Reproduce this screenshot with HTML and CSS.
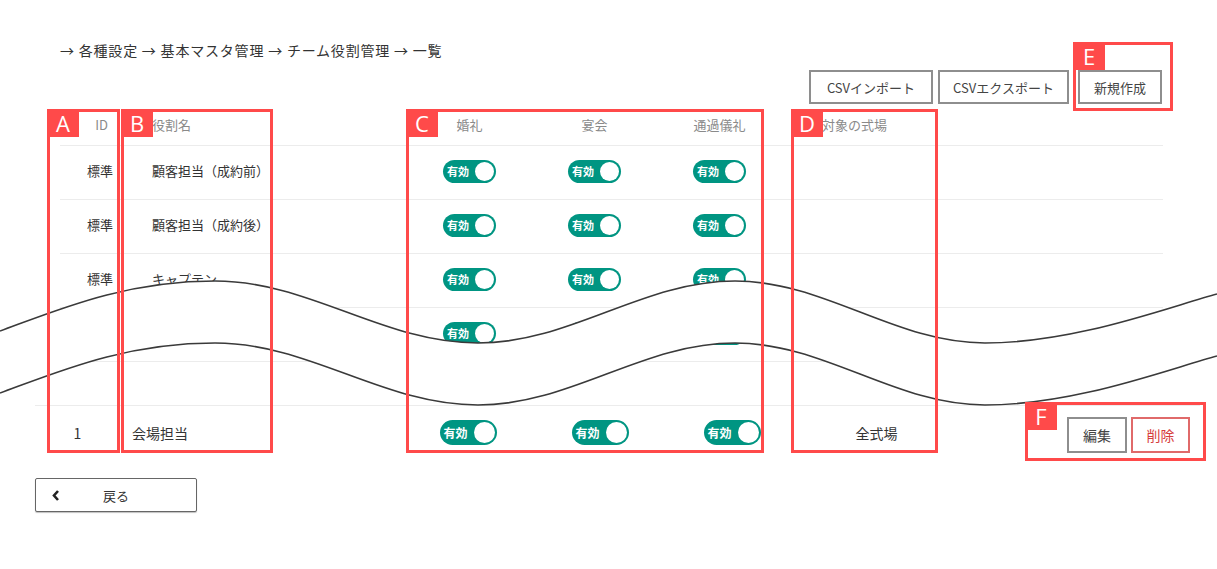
FILE: index.html
```html
<!DOCTYPE html>
<html lang="ja">
<head>
    <meta charset="UTF-8">
    <meta name="viewport" content="width=device-width, initial-scale=1.0">
    <title>チーム役割管理 一覧</title>
    <link rel="stylesheet" href="styles.css">
</head>
<body>
    <div class="page">
        <nav class="breadcrumb">→ 各種設定 → 基本マスタ管理 → チーム役割管理 → 一覧</nav>

        <div class="toolbar">
            <button class="btn btn-import">CSVインポート</button>
            <button class="btn btn-export">CSVエクスポート</button>
            <button class="btn btn-new">新規作成</button>
        </div>

        <!-- upper part of the list -->
        <div class="roles">
            <div class="roles-head">
                <div class="cell-id">ID</div>
                <div class="cell-name">役割名</div>
                <div class="cell-flag">婚礼</div>
                <div class="cell-flag">宴会</div>
                <div class="cell-flag">通過儀礼</div>
                <div class="cell-place">対象の式場</div>
                <div></div>
            </div>
            <div class="roles-row">
                <div class="cell-id">標準</div>
                <div class="cell-name">顧客担当（成約前）</div>
                <div class="cell-flag"><span class="toggle"><span class="toggle-text">有効</span><span class="toggle-knob"></span></span></div>
                <div class="cell-flag"><span class="toggle"><span class="toggle-text">有効</span><span class="toggle-knob"></span></span></div>
                <div class="cell-flag"><span class="toggle"><span class="toggle-text">有効</span><span class="toggle-knob"></span></span></div>
                <div class="cell-place"></div>
                <div></div>
            </div>
            <div class="roles-row">
                <div class="cell-id">標準</div>
                <div class="cell-name">顧客担当（成約後）</div>
                <div class="cell-flag"><span class="toggle"><span class="toggle-text">有効</span><span class="toggle-knob"></span></span></div>
                <div class="cell-flag"><span class="toggle"><span class="toggle-text">有効</span><span class="toggle-knob"></span></span></div>
                <div class="cell-flag"><span class="toggle"><span class="toggle-text">有効</span><span class="toggle-knob"></span></span></div>
                <div class="cell-place"></div>
                <div></div>
            </div>
            <div class="roles-row">
                <div class="cell-id">標準</div>
                <div class="cell-name">キャプテン</div>
                <div class="cell-flag"><span class="toggle"><span class="toggle-text">有効</span><span class="toggle-knob"></span></span></div>
                <div class="cell-flag"><span class="toggle"><span class="toggle-text">有効</span><span class="toggle-knob"></span></span></div>
                <div class="cell-flag"><span class="toggle"><span class="toggle-text">有効</span><span class="toggle-knob"></span></span></div>
                <div class="cell-place"></div>
                <div></div>
            </div>
            <div class="roles-row">
                <div class="cell-id"></div>
                <div class="cell-name"></div>
                <div class="cell-flag"><span class="toggle"><span class="toggle-text">有効</span><span class="toggle-knob"></span></span></div>
                <div class="cell-flag"><span class="toggle"><span class="toggle-text">有効</span><span class="toggle-knob"></span></span></div>
                <div class="cell-flag"><span class="toggle"><span class="toggle-text">有効</span><span class="toggle-knob"></span></span></div>
                <div class="cell-place"></div>
                <div></div>
            </div>
            <div class="roles-gap"></div>
        </div>

        <!-- lower part of the list -->
        <div class="roles-last">
            <div class="last-id">1</div>
            <div class="last-name">会場担当</div>
            <div class="cell-flag"><span class="toggle toggle-lg"><span class="toggle-text">有効</span><span class="toggle-knob"></span></span></div>
            <div class="cell-flag"><span class="toggle toggle-lg"><span class="toggle-text">有効</span><span class="toggle-knob"></span></span></div>
            <div class="cell-flag"><span class="toggle toggle-lg"><span class="toggle-text">有効</span><span class="toggle-knob"></span></span></div>
            <div class="last-place">全式場</div>
            <div class="last-actions">
                <button class="btn-row">編集</button>
                <button class="btn-row btn-delete">削除</button>
            </div>
        </div>

        <button class="btn-back">
            <svg width="8" height="11" viewBox="0 0 8 11"><polyline points="6,1 2,5.5 6,10" fill="none" stroke="#222" stroke-width="2.6"/></svg>
            <span>戻る</span>
            <span></span>
        </button>

        <!-- omission marks -->
        <svg class="break-wave" width="1217" height="569" viewBox="0 0 1217 569">
            <path fill="#fff" d="M0,331 C60,309 125,281 215,281 C310,281 383,343 478,343 C571,343 642,281 735,281 C825,281 895,343 985,343 C1075,343 1167,307.5 1217,294 L1217,356 C1167,369.5 1075,405 985,405 C895,405 825,343 735,343 C642,343 571,405 478,405 C383,405 310,343 215,343 C125,343 60,371 0,393 Z"/>
            <path fill="none" stroke="#3a3a3a" stroke-width="1.6" d="M0,331 C60,309 125,281 215,281 C310,281 383,343 478,343 C571,343 642,281 735,281 C825,281 895,343 985,343 C1075,343 1167,307.5 1217,294"/>
            <path fill="none" stroke="#3a3a3a" stroke-width="1.6" d="M0,393 C60,371 125,343 215,343 C310,343 383,405 478,405 C571,405 642,343 735,343 C825,343 895,405 985,405 C1075,405 1167,369.5 1217,356"/>
        </svg>

        <div class="mark mark-a"><span class="mark-tag">A</span></div>
        <div class="mark mark-b"><span class="mark-tag">B</span></div>
        <div class="mark mark-c"><span class="mark-tag">C</span></div>
        <div class="mark mark-d"><span class="mark-tag">D</span></div>
        <div class="mark mark-e"><span class="mark-tag">E</span></div>
        <div class="mark mark-f"><span class="mark-tag">F</span></div>
    </div>
</body>
</html>
```

FILE: styles.css
```css
body {
    margin: 0;
    background-color: #fff;
    font-family: "Noto Sans CJK JP", "Noto Sans", sans-serif;
    color: #333;
}

.page {
    position: relative;
    width: 1217px;
    height: 569px;
    padding: 40px 0 0 35px;
    box-sizing: border-box;
    overflow: hidden;
}

.breadcrumb {
    margin-left: 25px;
    font-size: 14px;
    line-height: 20px;
    letter-spacing: 0.8px;
    color: #333;
}

.toolbar {
    display: flex;
    justify-content: flex-end;
    gap: 5px;
    width: 1127px;
    margin-top: 10px;
}

.btn {
    height: 34px;
    padding: 0;
    border: 2px solid #8e8e8e;
    background-color: #fff;
    font-family: inherit;
    font-size: 13px;
    color: #444;
}

.btn-import {
    width: 124px;
}

.btn-export {
    width: 131px;
}

.btn-new {
    width: 84px;
    margin-left: 4px;
}

/* list */
.roles {
    width: 1103px;
    margin: 6px 0 0 25px;
}

.roles-head,
.roles-row {
    display: grid;
    grid-template-columns: 60px 287px 125px 125px 125px 218px 1fr;
    align-items: center;
    box-sizing: border-box;
}

.roles-head {
    height: 35px;
    padding-bottom: 7px;
    font-size: 13px;
    color: #8a8a8a;
}

.roles-row {
    height: 54px;
    padding-bottom: 5px;
    border-top: 1px solid #ececec;
    font-size: 13px;
}

.roles-row .cell-flag {
    padding-top: 2px;
}

.cell-id {
    text-align: right;
    padding-right: 7px;
}

.roles-head .cell-id {
    padding-right: 12px;
}

.cell-name {
    padding-left: 32px;
}

.cell-flag {
    display: flex;
    justify-content: center;
}

.cell-place {
    padding-left: 40px;
}

.roles-gap {
    height: 44px;
    border-top: 1px solid #ececec;
    box-sizing: border-box;
}

.roles-last {
    display: grid;
    grid-template-columns: 85px 282px 132px 132px 132px 157px 1fr;
    align-items: center;
    width: 1165px;
    height: 55px;
    padding-bottom: 1px;
    border-top: 1px solid #ececec;
    box-sizing: border-box;
    font-size: 14px;
}

.last-id {
    text-align: center;
}

.last-name {
    padding-left: 12px;
}

.last-place {
    text-align: center;
}

.last-actions {
    display: flex;
    justify-content: flex-end;
    gap: 4px;
    padding: 4px 10px 0 0;
}

.btn-row {
    width: 60px;
    height: 36px;
    border: 2px solid #8e8e8e;
    background-color: #fff;
    font-family: inherit;
    font-size: 14px;
    color: #444;
}

.btn-delete {
    width: 59px;
    border-color: #e06a6a;
    color: #d63c3c;
}

/* switch */
.toggle {
    display: inline-flex;
    align-items: center;
    justify-content: space-between;
    width: 53px;
    height: 23px;
    padding: 0 2px 0 4px;
    border-radius: 12px;
    background-color: #009582;
    box-sizing: border-box;
}

.toggle-text {
    font-size: 11px;
    font-weight: bold;
    color: #fff;
    line-height: 1;
}

.toggle-knob {
    width: 19px;
    height: 19px;
    border-radius: 50%;
    background-color: #fff;
}

.toggle-lg {
    width: 57px;
    height: 25px;
    border-radius: 13px;
}

.toggle-lg .toggle-text {
    font-size: 12px;
}

.toggle-lg .toggle-knob {
    width: 21px;
    height: 21px;
}

.btn-back {
    display: grid;
    grid-template-columns: 40px 1fr 40px;
    align-items: center;
    justify-items: center;
    width: 162px;
    height: 34px;
    margin-top: 18px;
    padding: 0;
    border: 1px solid #666;
    border-radius: 2px;
    box-shadow: 0 1px 1px rgba(0, 0, 0, 0.25);
    background-color: #fff;
    font-family: inherit;
    font-size: 13px;
    color: #333;
}

/* omission wave */
.break-wave {
    position: absolute;
    left: 0;
    top: 0;
    z-index: 2;
}

/* annotation boxes */
.mark {
    position: absolute;
    z-index: 3;
    border: 3px solid #ff4a4a;
    box-sizing: border-box;
}

.mark-tag {
    position: absolute;
    top: -3px;
    left: -3px;
    width: 32px;
    height: 28px;
    display: flex;
    align-items: center;
    justify-content: center;
    background-color: #ff4a4a;
    color: #fff;
    font-family: "Open Sans", sans-serif;
    font-size: 22px;
    line-height: 1;
}

.mark-a { left: 47px; top: 109px; width: 73px; height: 344px; }
.mark-b { left: 121px; top: 109px; width: 152px; height: 344px; }
.mark-c { left: 406px; top: 109px; width: 358px; height: 344px; }
.mark-d { left: 791px; top: 109px; width: 147px; height: 344px; }
.mark-e { left: 1073px; top: 42px; width: 100px; height: 69px; }
.mark-f { left: 1025px; top: 402px; width: 181px; height: 59px; }
```
